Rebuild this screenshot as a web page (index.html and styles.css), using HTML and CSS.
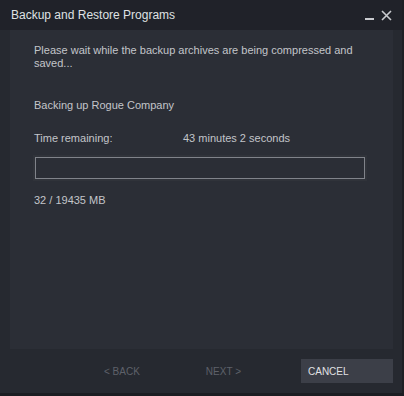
FILE: index.html
```html
<!DOCTYPE html>
<html lang="en">
<head>
  <meta charset="UTF-8" />
  <title>Backup and Restore Programs</title>
  <link rel="stylesheet" href="styles.css">
</head>
<body>
  <div class="dialog">
    <!-- title bar -->
    <div class="titlebar">
      <span class="title">Backup and Restore Programs</span>
      <div class="controls">
        <span class="min"></span>
        <svg class="close" width="11" height="11" viewBox="0 0 11 11">
          <path d="M1 1 L10 10 M10 1 L1 10" stroke="#c9cbcf" stroke-width="1.6" fill="none"/>
        </svg>
      </div>
    </div>

    <!-- content -->
    <div class="panel">
      <p class="msg">Please wait while the backup archives are being compressed and saved...</p>
      <p class="status">Backing up Rogue Company</p>
      <div class="time">
        <span class="time-label">Time remaining:</span>
        <span>43 minutes 2 seconds</span>
      </div>
      <div class="progress"><div class="bar"></div></div>
      <p class="size">32 / 19435 MB</p>
    </div>

    <!-- footer -->
    <div class="footer">
      <span class="nav back">&lt; BACK</span>
      <span class="nav next">NEXT &gt;</span>
      <button class="btn-cancel">CANCEL</button>
    </div>
  </div>
</body>
</html>
```

FILE: styles.css
```css
* {
  box-sizing: border-box;
  margin: 0;
  padding: 0;
  font-family: 'Liberation Sans', Arial, sans-serif;
}

body {
  width: 404px;
  height: 396px;
  background: #1b1d22;
  overflow: hidden;
}

.dialog {
  width: 404px;
  height: 396px;
  background: #262930;
  border-right: 2px solid #1d1f24;
  border-bottom: 3px solid #1b1d22;
  display: flex;
  flex-direction: column;
}

/*********TITLE***********/
.titlebar {
  height: 30px;
  background: #202229;
  display: flex;
  align-items: center;
  justify-content: space-between;
  padding: 0 10px 0 11px;
}

.title {
  font-size: 12px;
  color: #dfe1e3;
}

.controls {
  display: flex;
  align-items: center;
  gap: 7px;
}

.min {
  width: 9px;
  height: 2px;
  background: #c9cbcf;
  margin-top: 8px;
}

/*********PANEL***********/
.panel {
  flex: 1;
  margin: 0 9px 0 10px;
  background: #2b2e36;
  padding: 14px 24px 0 24px;
  font-size: 11px;
  color: #c3c5ca;
}

.msg {
  line-height: 13px;
  width: 320px;
}

.status {
  margin-top: 29px;
}

.time {
  margin-top: 21px;
  display: flex;
}

.time-label {
  width: 149px;
}

.progress {
  margin-top: 13px;
  width: 330px;
  height: 22px;
  margin-left: 1px;
  border: 1px solid #80838a;
  outline: 2px solid #30333a;
  background: #2b2e36;
}

.bar {
  width: 0;
  height: 100%;
  background: #6a7fb0;
}

.size {
  margin-top: 15px;
}

/*********FOOTER***********/
.footer {
  height: 44px;
  display: flex;
  align-items: center;
  padding: 0 9px 0 104px;
  font-size: 10px;
}

.nav {
  color: #5e616a;
}

.next {
  margin-left: 66px;
}

.btn-cancel {
  margin-left: auto;
  width: 92px;
  height: 24px;
  border: none;
  background: #3c3f48;
  color: #e0e1e4;
  font-size: 10px;
  text-align: left;
  padding-left: 7px;
}
```
